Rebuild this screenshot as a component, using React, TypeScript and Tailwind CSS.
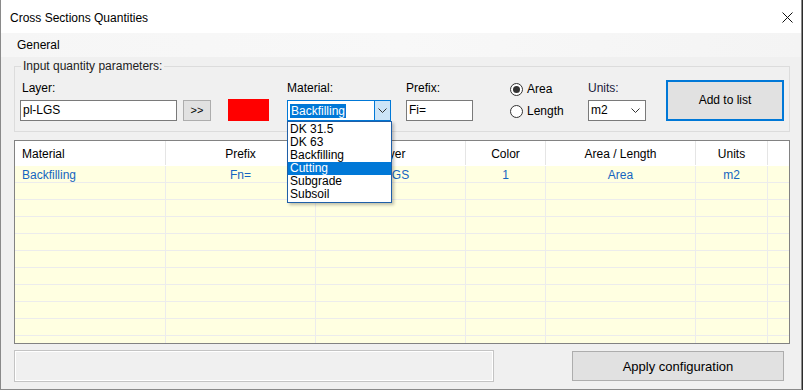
import { useState } from 'react';

const cols = [151, 150, 150, 80, 150, 72];
const headers = ['Material', 'Prefix', 'Layer', 'Color', 'Area / Length', 'Units'];
const rows = [['Backfilling', 'Fn=', 'pl-LGS', '1', 'Area', 'm2']];
const materials = ['DK 31.5', 'DK 63', 'Backfilling', 'Cutting', 'Subgrade', 'Subsoil'];

function Chevron({ className = '' }: { className?: string }) {
  return (
    <svg width="9" height="5" viewBox="0 0 9 5" className={className}>
      <path d="M0.5 0.5 L4.5 4.5 L8.5 0.5" fill="none" stroke="#333" strokeWidth="1" />
    </svg>
  );
}

function Radio({ checked, label }: { checked: boolean; label: string }) {
  return (
    <div className="flex items-center h-[14px]">
      <div className="w-[13px] h-[13px] rounded-full border border-[#333] bg-white flex items-center justify-center">
        {checked && <div className="w-[7px] h-[7px] rounded-full bg-[#333]" />}
      </div>
      <span className="ml-[4px]">{label}</span>
    </div>
  );
}

export default function App() {
  const [selected] = useState('Cutting');
  const grid = 'grid grid-cols-[151px_150px_150px_80px_150px_72px_1fr]';

  return (
    <div className="w-[803px] h-[390px] bg-[#2b2b2b] overflow-hidden text-[12px] leading-[15px] text-black font-['Liberation_Sans',Arial,sans-serif]">
      <div className="w-[802px] h-[390px] bg-[#f0f0f0] border-x border-b border-[#8a8a8a] flex flex-col">
        {/* Title bar */}
        <div className="h-[33px] bg-white flex items-center justify-between pl-[9px] pr-[8px] shrink-0">
          <span className="pt-[3px]">Cross Sections Quantities</span>
          <svg width="11" height="11" viewBox="0 0 11 11" className="mt-[1px]">
            <path d="M0.5 0.5 L10.5 10.5 M10.5 0.5 L0.5 10.5" stroke="#111" strokeWidth="1" />
          </svg>
        </div>

        {/* General strip */}
        <div className="h-[24px] bg-gradient-to-r from-[#f6f6f6] via-[#f8f8f8] to-[#f4f4f4] flex items-center pl-[16px] shrink-0">
          General
        </div>

        <div className="flex-1 flex flex-col pl-[13px] pr-[11px] pt-[2px]">
          {/* Group box */}
          <fieldset className="border border-[#dcdcdc] pl-[5px] pb-[10px]">
            <legend className="ml-[1px] px-[2px] text-[#222]">Input quantity parameters:</legend>
            <div className="flex items-start pt-[7px]">
              {/* Layer */}
              <div className="flex flex-col">
                <span className="pl-[2px] h-[15px]">Layer:</span>
                <div className="flex mt-[4px]">
                  <div className="w-[157px] h-[21px] bg-white border border-[#7a7a7a] flex items-center pl-[2px]">pl-LGS</div>
                  <div className="ml-[6px] w-[28px] h-[21px] bg-[#e1e1e1] border border-[#adadad] flex items-center justify-center text-[11px]">&gt;&gt;</div>
                </div>
              </div>
              <div className="ml-[17px] mt-[18px] w-[41px] h-[22px] bg-[#ff0000]" />

              {/* Material */}
              <div className="ml-[18px] flex flex-col">
                <span className="h-[15px]">Material:</span>
                <div className="relative mt-[4px]">
                  <div className="w-[104px] h-[21px] bg-white border border-[#0078d7] flex items-stretch">
                    <div className="flex-1 flex items-center pl-[2px]">
                      <span className="bg-[#0078d7] text-white px-[1px] leading-[14px]">Backfilling</span>
                    </div>
                    <div className="w-[16px] bg-[#cce4f7] border-l border-[#0078d7] flex items-center justify-center">
                      <Chevron />
                    </div>
                  </div>
                  {/* Dropdown list */}
                  <div className="absolute left-0 top-[21px] w-[105px] bg-white border border-[#1f5fa8] shadow-[2px_2px_3px_rgba(0,0,0,0.25)] z-10 py-[1px]">
                    {materials.map((m) => (
                      <div
                        key={m}
                        className={`h-[13px] leading-[13px] pl-[2px] ${m === selected ? 'bg-[#0078d7] text-white' : ''}`}
                      >
                        {m}
                      </div>
                    ))}
                  </div>
                </div>
              </div>

              {/* Prefix */}
              <div className="ml-[15px] flex flex-col">
                <span className="h-[15px]">Prefix:</span>
                <div className="mt-[4px] w-[67px] h-[21px] bg-white border border-[#7a7a7a] flex items-center pl-[2px]">Fi=</div>
              </div>

              {/* Radios */}
              <div className="ml-[37px] w-[78px] flex flex-col gap-[8px] pt-[1px]">
                <Radio checked label="Area" />
                <Radio checked={false} label="Length" />
              </div>

              {/* Units */}
              <div className="flex flex-col">
                <span className="h-[15px] text-[#1a1a3a]">Units:</span>
                <div className="mt-[4px] w-[58px] h-[21px] bg-white border border-[#7a7a7a] flex items-center justify-between pl-[2px] pr-[5px]">
                  <span>m2</span>
                  <Chevron />
                </div>
              </div>

              {/* Add to list */}
              <div className="ml-[20px] -mt-[1px] w-[118px] h-[41px] bg-[#e1e1e1] border-2 border-[#0078d7] flex items-center justify-center">
                Add to list
              </div>
            </div>
          </fieldset>

          {/* List view */}
          <div className="mt-[8px] h-[204px] border border-[#828282] bg-[#ffffe1] overflow-hidden flex flex-col">
            <div className={`${grid} h-[25px] bg-white shrink-0`}>
              {headers.map((h, i) => (
                <div
                  key={h}
                  className={`flex items-center pt-[3px] mb-[1px] border-r border-[#e5e5e5] ${i === 0 ? 'pl-[7px]' : 'justify-center'}`}
                >
                  {h}
                </div>
              ))}
              <div />
            </div>
            {Array.from({ length: 11 }).map((_, r) => {
              const row = rows[r];
              return (
                <div key={r} className={`${grid} h-[17px] shrink-0 border-b border-[#ececec]`}>
                  {cols.map((_, c) => (
                    <div
                      key={c}
                      className={`flex items-center pt-[2px] border-r border-[#ececec] text-[#1565c0] ${c === 0 ? 'pl-[7px]' : 'justify-center'}`}
                    >
                      {row ? row[c] : ''}
                    </div>
                  ))}
                  <div />
                </div>
              );
            })}
          </div>

          {/* Bottom bar */}
          <div className="mt-[6px] flex items-start">
            <div className="w-[480px] h-[32px] border border-[#c4c4c4] shadow-[inset_1px_1px_0_#ffffff,inset_-1px_-1px_0_#ffffff]" />
            <div className="ml-auto mr-[6px] mt-[1px] w-[212px] h-[30px] bg-[#e1e1e1] border border-[#adadad] flex items-center justify-center text-[13px]">
              Apply configuration
            </div>
          </div>
        </div>
      </div>
    </div>
  );
}
